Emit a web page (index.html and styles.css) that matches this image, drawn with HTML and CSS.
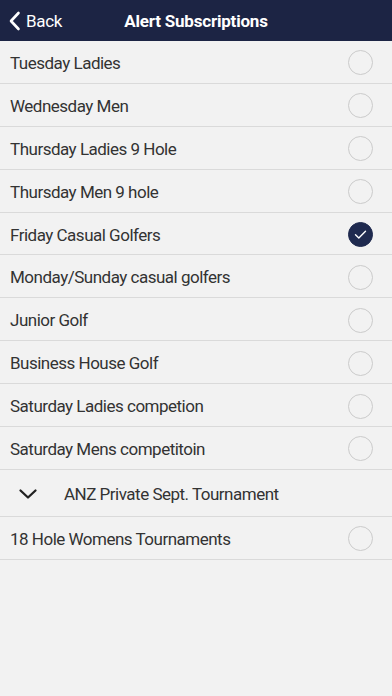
FILE: index.html
```html
<!DOCTYPE html>
<html>
<head>
<meta charset="utf-8">
<link rel="stylesheet" href="styles.css">
</head>
<body>
<header class="nav">
  <div class="back">
    <svg class="back-icon" width="13" height="20" viewBox="0 0 13 20"><path d="M10.5 2 L3 10 L10.5 18" fill="none" stroke="#fff" stroke-width="2.6" stroke-linecap="round" stroke-linejoin="round"/></svg>
    <span>Back</span>
  </div>
  <div class="title">Alert Subscriptions</div>
</header>
<ul class="list">
  <li class="row"><span class="label">Tuesday Ladies</span><span class="radio"></span></li>
  <li class="row"><span class="label">Wednesday Men</span><span class="radio"></span></li>
  <li class="row"><span class="label">Thursday Ladies 9 Hole</span><span class="radio"></span></li>
  <li class="row"><span class="label">Thursday Men 9 hole</span><span class="radio"></span></li>
  <li class="row"><span class="label">Friday Casual Golfers</span><span class="radio checked"><svg width="25" height="25" viewBox="0 0 25 25"><path d="M7.5 12.8 L10.8 16 L17.5 9.2" fill="none" stroke="#fff" stroke-width="1.4" stroke-linecap="round" stroke-linejoin="round"/></svg></span></li>
  <li class="row"><span class="label">Monday/Sunday casual golfers</span><span class="radio"></span></li>
  <li class="row"><span class="label">Junior Golf</span><span class="radio"></span></li>
  <li class="row"><span class="label">Business House Golf</span><span class="radio"></span></li>
  <li class="row"><span class="label">Saturday Ladies competion</span><span class="radio"></span></li>
  <li class="row"><span class="label">Saturday Mens competitoin</span><span class="radio"></span></li>
  <li class="row group"><svg class="chev" width="20" height="12" viewBox="0 0 20 12"><path d="M2.5 2.5 L10 9.5 L17.5 2.5" fill="none" stroke="#222" stroke-width="2.3" stroke-linecap="round" stroke-linejoin="round"/></svg><span class="label">ANZ Private Sept. Tournament</span></li>
  <li class="row"><span class="label">18 Hole Womens Tournaments</span><span class="radio"></span></li>
</ul>
</body>
</html>
```
FILE: styles.css
```css
* { box-sizing: border-box; }
html, body { margin: 0; padding: 0; }
body {
  width: 392px;
  height: 696px;
  background: #f2f2f2;
  font-family: Roboto, "Liberation Sans", Arial, sans-serif;
  color: #333;
  overflow: hidden;
}
.nav {
  height: 41px;
  background: #1c2444;
  color: #fff;
  display: flex;
  align-items: center;
  justify-content: center;
  position: relative;
}
.back {
  position: absolute;
  left: 8px;
  top: 0;
  height: 41px;
  display: flex;
  align-items: center;
  gap: 5px;
  font-size: 17px;
  letter-spacing: -0.3px;
}
.back-icon { display: block; }
.title {
  font-size: 17px;
  font-weight: 700;
  letter-spacing: -0.2px;
}
.list {
  list-style: none;
  margin: 0;
  padding: 0;
}
.row {
  height: 42.9px;
  border-bottom: 1px solid #dadada;
  display: flex;
  align-items: center;
  justify-content: space-between;
  padding: 2px 19px 0 10px;
}
.label {
  font-size: 17px;
  letter-spacing: -0.5px;
  color: #333;
}
.radio {
  width: 25px;
  height: 25px;
  border-radius: 50%;
  border: 1px solid #cbcbcb;
  display: block;
}
.radio.checked {
  background: #1f2a4f;
  border-color: #1f2a4f;
}
.radio.checked svg { display: block; margin: -1px; }
.row.group {
  height: 47px;
  justify-content: flex-start;
  padding-left: 18px;
  gap: 26px;
}
.chev { display: block; }
```
